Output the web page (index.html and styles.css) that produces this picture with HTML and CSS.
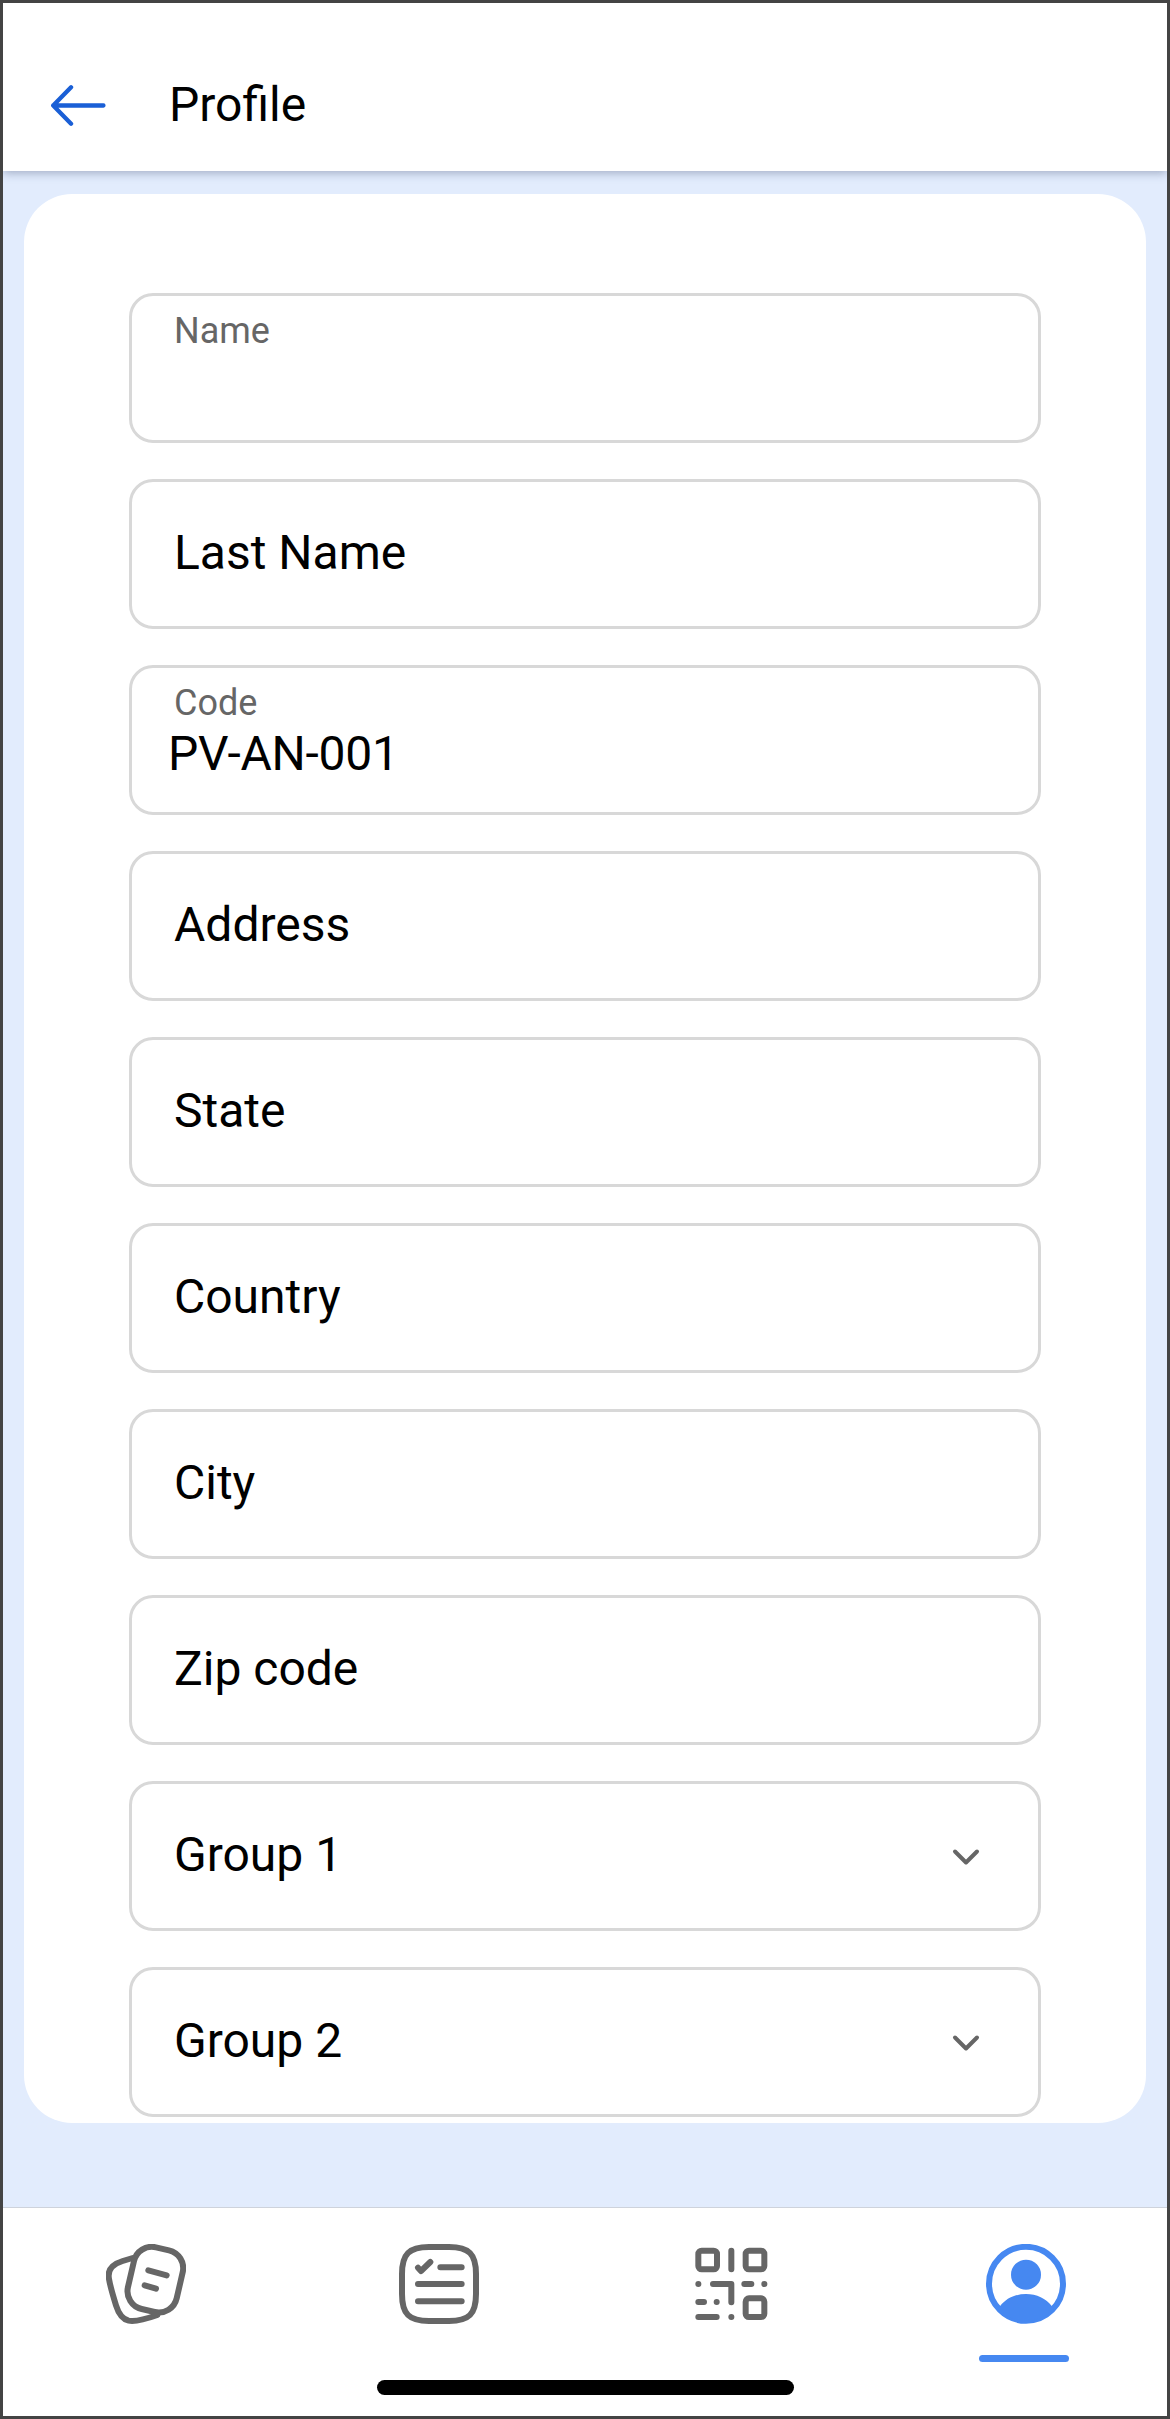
FILE: index.html
```html
<!DOCTYPE html>
<html lang="en">
<head>
  <meta charset="UTF-8">
  <meta name="viewport" content="width=device-width, initial-scale=1.0">
  <title>Profile</title>
  <link rel="stylesheet" href="styles.css">
</head>
<body>
  <div class="screen">
    <!-- Header -->
    <header class="top-bar">
      <a class="back" href="#" aria-label="Back">
        <svg viewBox="0 0 168 124"><path d="M161 62H9M63 7L9 62L63 117"/></svg>
      </a>
      <h1>Profile</h1>
    </header>

    <!-- Profile Form -->
    <main>
      <form class="card">
        <div class="field filled"><label>Name</label></div>
        <div class="field"><label>Last Name</label></div>
        <div class="field filled"><label>Code</label><span class="value">PV-AN-001</span></div>
        <div class="field"><label>Address</label></div>
        <div class="field"><label>State</label></div>
        <div class="field"><label>Country</label></div>
        <div class="field"><label>City</label></div>
        <div class="field"><label>Zip code</label></div>
        <div class="field select">
          <label>Group 1</label>
          <svg class="chevron" viewBox="0 0 28 18"><path d="M3 3.5L14 14.5L25 3.5"/></svg>
        </div>
        <div class="field select">
          <label>Group 2</label>
          <svg class="chevron" viewBox="0 0 28 18"><path d="M3 3.5L14 14.5L25 3.5"/></svg>
        </div>
      </form>
    </main>

    <!-- Bottom Navigation -->
    <nav class="tab-bar">
      <a class="tab" href="#" aria-label="Cards">
        <svg viewBox="0 0 240 240">
          <path d="M80 42L50 51C18 61 4 80 9 105C12 124 22 158 30 184C38 210 48 225 68 230C88 234 118 226 154 213"/>
          <rect x="73" y="12" width="150" height="190" rx="55" transform="rotate(13 148 107)"/>
          <path d="M127 79L182 94M116 124L150 134"/>
        </svg>
      </a>
      <a class="tab" href="#" aria-label="Tasks">
        <svg viewBox="0 0 240 240">
          <path d="M90 9H150C210 9 231 30 231 90V150C231 210 210 231 150 231H90C30 231 9 210 9 150V90C9 30 30 9 90 9Z"/>
          <path d="M57 71L66 81L94 54M124 70H188M57 120H188M57 172H188"/>
        </svg>
      </a>
      <a class="tab" href="#" aria-label="Scan code">
        <svg viewBox="0 0 240 240">
          <rect x="16" y="20" width="56" height="56" rx="10"/>
          <rect x="158" y="20" width="56" height="56" rx="10"/>
          <rect x="158" y="163" width="56" height="56" rx="10"/>
          <path d="M115 20V76M16 120h.1M60 120H115V175M154 120H175M214 120h.1M16 174H33M71 174h.1M16 219H71M115 219h.1"/>
        </svg>
      </a>
      <a class="tab active" href="#" aria-label="Profile">
        <svg viewBox="0 0 240 240">
          <circle cx="120" cy="119.5" r="111"/>
          <circle class="solid" cx="120" cy="92" r="45"/>
          <path class="solid" d="M42 187C60 163 88 150 120 150S180 163 198 187L204 193A112 112 0 0 1 36 193Z"/>
        </svg>
      </a>
      <span class="home-indicator"></span>
    </nav>
  </div>
</body>
</html>
```

FILE: styles.css
```css
* {
  margin: 0;
  padding: 0;
  box-sizing: border-box;
}

body {
  font-family: Roboto, "Liberation Sans", sans-serif;
  background: #fff;
  color: #000;
}

.screen {
  display: flex;
  flex-direction: column;
  width: 1170px;
  height: 2419px;
  border: 3px solid #444;
  background: #e2ecfd;
}

svg {
  display: block;
  fill: none;
  stroke: currentColor;
  stroke-linecap: round;
  stroke-linejoin: round;
}

/* Header */
.top-bar {
  display: flex;
  align-items: center;
  gap: 63px;
  height: 168px;
  padding: 35px 47px 0;
  background: #fff;
  box-shadow: 0 2px 9px rgba(60, 75, 110, 0.4);
  clip-path: inset(0 0 -20px 0);
}

.top-bar h1 {
  font-size: 48px;
  font-weight: 400;
  line-height: 56px;
}

.back {
  color: #1a5fd6;
}

.back svg {
  width: 56px;
  height: 41px;
  margin-top: 1px;
  stroke-width: 13;
}

/* Form */
main {
  flex: 1;
  padding: 23px 21px 0;
}

.card {
  display: flex;
  flex-direction: column;
  gap: 36px;
  height: 1929px;
  padding: 99px 105px 0;
  border-radius: 48px;
  background: #fff;
}

.field {
  display: flex;
  flex-direction: column;
  justify-content: center;
  height: 150px;
  padding: 0 42px 2px;
  border: 3px solid #d8d8d8;
  border-radius: 24px;
  font-size: 48px;
  line-height: 56px;
}

.filled {
  justify-content: flex-start;
  padding-top: 14px;
}

.filled label {
  font-size: 36px;
  line-height: 42px;
  color: #666;
}

.value {
  margin: 2px 0 0 -6px;
  letter-spacing: -0.25px;
}

.select {
  flex-direction: row;
  align-items: center;
  justify-content: space-between;
  padding-right: 58px;
}

.chevron {
  width: 28px;
  height: 18px;
  margin-top: 4px;
  color: #666;
  stroke-width: 4;
}

/* Bottom Navigation */
.tab-bar {
  position: relative;
  display: flex;
  justify-content: space-between;
  height: 209px;
  padding: 36px 101px 0 103px;
  border-top: 1px solid #ced3dc;
  background: #fff;
}

.tab {
  position: relative;
  height: 80px;
  color: #666;
}

.tab svg {
  width: 80px;
  height: 80px;
  stroke-width: 18;
}

.tab .solid {
  fill: currentColor;
  stroke: none;
}

.active {
  color: #4688f1;
}

.active::after {
  content: '';
  position: absolute;
  left: -7px;
  top: 111px;
  width: 90px;
  height: 7px;
  border-radius: 4px;
  background: currentColor;
}

.home-indicator {
  position: absolute;
  left: 374px;
  bottom: 21px;
  width: 417px;
  height: 15px;
  border-radius: 8px;
  background: #000;
}
```
